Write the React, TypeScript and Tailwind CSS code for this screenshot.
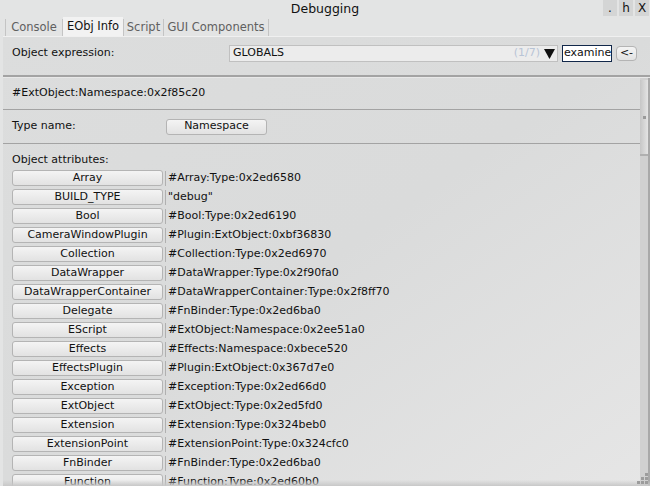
import React from "react";

const rows: [string, string][] = [
  ["Array", "#Array:Type:0x2ed6580"],
  ["BUILD_TYPE", "\"debug\""],
  ["Bool", "#Bool:Type:0x2ed6190"],
  ["CameraWindowPlugin", "#Plugin:ExtObject:0xbf36830"],
  ["Collection", "#Collection:Type:0x2ed6970"],
  ["DataWrapper", "#DataWrapper:Type:0x2f90fa0"],
  ["DataWrapperContainer", "#DataWrapperContainer:Type:0x2f8ff70"],
  ["Delegate", "#FnBinder:Type:0x2ed6ba0"],
  ["EScript", "#ExtObject:Namespace:0x2ee51a0"],
  ["Effects", "#Effects:Namespace:0xbece520"],
  ["EffectsPlugin", "#Plugin:ExtObject:0x367d7e0"],
  ["Exception", "#Exception:Type:0x2ed66d0"],
  ["ExtObject", "#ExtObject:Type:0x2ed5fd0"],
  ["Extension", "#Extension:Type:0x324beb0"],
  ["ExtensionPoint", "#ExtensionPoint:Type:0x324cfc0"],
  ["FnBinder", "#FnBinder:Type:0x2ed6ba0"],
  ["Function", "#Function:Type:0x2ed60b0"],
];

function Btn({ children, className = "" }: { children: React.ReactNode; className?: string }) {
  return (
    <div
      className={`flex items-center justify-center h-[16px] rounded-[3px] border border-[#b4b4b4] bg-gradient-to-b from-[#f4f4f4] to-[#e2e2e2] text-[#111] ${className}`}
    >
      {children}
    </div>
  );
}

export default function App() {
  return (
    <div
      className="relative w-[650px] h-[486px] overflow-hidden bg-[#e3e4e4] text-[11px] text-[#111] flex flex-col"
      style={{ fontFamily: '"DejaVu Sans", Verdana, sans-serif' }}
    >
      {/* title bar */}
      <div className="relative h-[17px] flex items-center justify-center shrink-0">
        <span className="text-[12.5px] leading-none text-[#111] mt-[1px]">Debugging</span>
        <div className="absolute right-[1px] top-0 flex gap-[2px] text-[12px]">
          <div className="w-[14px] h-[16px] bg-[#d4d5d5] flex items-center justify-center leading-none">.</div>
          <div className="w-[14px] h-[16px] bg-[#d4d5d5] flex items-center justify-center leading-none">h</div>
          <div className="w-[14px] h-[16px] bg-[#d4d5d5] flex items-center justify-center leading-none">X</div>
        </div>
      </div>

      {/* tabs */}
      <div className="h-[19px] flex items-end pl-[5px] shrink-0 text-[11.5px]">
        <div className="h-[17px] w-[58px] flex items-center justify-center text-[#606060] border-r border-[#c4c4c4] border-l">Console</div>
        <div className="h-[20px] w-[60px] flex items-center justify-center bg-[#f2f2f2] text-[#111] -mb-[1px]">EObj Info</div>
        <div className="h-[17px] w-[41px] flex items-center justify-center text-[#606060] border-r border-l border-[#c4c4c4]">Script</div>
        <div className="h-[17px] w-[105px] flex items-center justify-center text-[#606060] border-r border-[#c4c4c4]">GUI Components</div>
      </div>

      {/* panel */}
      <div className="flex-1 ml-[3px] bg-gradient-to-br from-[#dcdddd] via-[#dadbdb] to-[#e6e6e6] border-t border-[#f0f0f0] flex flex-col min-h-0 relative">
        {/* expression row */}
        <div className="h-[38px] flex items-start pt-[8px] shrink-0 pr-[11px]">
          <div className="pl-[9px] w-[226px] h-[17px] flex items-center">Object expression:</div>
          <div className="w-[329px] h-[17px] bg-[#ececec] border border-[#c0c0c0] flex items-center pl-[3px] pr-[2px]">
            <span className="flex-1">GLOBALS</span>
            <span className="text-[#b8c4d6] mr-[4px]">(1/7)</span>
            <svg width="11" height="10" viewBox="0 0 11 10"><path d="M0 0 L11 0 L5.5 10 Z" fill="#111" /></svg>
          </div>
          <div className="ml-[4px] w-[50px] h-[17px] bg-white border border-[#12284a] flex items-center pl-[1px]">examine</div>
          <Btn className="ml-[4px] mt-[1px] w-[21px] !h-[15px] rounded-[4px]">&lt;-</Btn>
        </div>
        <div className="h-[2px] bg-[#a3a3a3] border-b border-[#e8e8e8] shrink-0 box-content" />

        <div className="flex-1 flex min-h-0">
          <div className="flex-1 flex flex-col min-w-0">
            <div className="h-[31px] flex items-center pl-[9px] shrink-0">#ExtObject:Namespace:0x2f85c20</div>
            <div className="h-[1px] bg-[#a3a3a3] shrink-0" />
            <div className="h-[33px] flex items-center shrink-0">
              <span className="pl-[9px] w-[163px]">Type name:</span>
              <Btn className="w-[101px]">Namespace</Btn>
            </div>
            <div className="h-[1px] bg-[#a3a3a3] shrink-0" />
            <div className="h-[23px] flex items-end pl-[9px] shrink-0 leading-none pb-[2px]">Object attributes:</div>
            <div className="flex flex-col gap-[3px] pt-[3px] pl-[9px]">
              {rows.map(([k, v]) => (
                <div key={k} className="flex items-center h-[16px]">
                  <Btn className="w-[151px] shrink-0">{k}</Btn>
                  <div className="ml-[2px] h-[15px] border-l border-[#b0b0b0] pl-[2px] flex items-center whitespace-nowrap">{v}</div>
                </div>
              ))}
            </div>
          </div>
          {/* scrollbar */}
          <div className="w-[10px] shrink-0 flex flex-col bg-[#d0d0d0] border-r-[2px] border-[#a8a8a8] pt-[2px]">
            <div className="h-[76px] bg-gradient-to-r from-[#c6c6c6] to-[#e4e4e4] border-b-[2px] border-[#b0b0b0] flex items-center justify-center">
              <div className="w-[3px] h-[3px] bg-[#9a9a9a]" />
            </div>
          </div>
        </div>

        {/* bottom shade & grip */}
        <div className="absolute left-0 right-0 bottom-0 h-[6px] bg-gradient-to-b from-transparent to-[#c8c8c8]" />
        <div className="absolute right-[2px] bottom-[2px] grid grid-cols-3 gap-[1px]">
          <div className="w-[3px] h-[3px]" />
          <div className="w-[3px] h-[3px]" />
          <div className="w-[3px] h-[3px] bg-[#9c9c9c]" />
          <div className="w-[3px] h-[3px]" />
          <div className="w-[3px] h-[3px] bg-[#9c9c9c]" />
          <div className="w-[3px] h-[3px] bg-[#9c9c9c]" />
          <div className="w-[3px] h-[3px] bg-[#9c9c9c]" />
          <div className="w-[3px] h-[3px] bg-[#9c9c9c]" />
          <div className="w-[3px] h-[3px] bg-[#9c9c9c]" />
        </div>
      </div>
    </div>
  );
}
